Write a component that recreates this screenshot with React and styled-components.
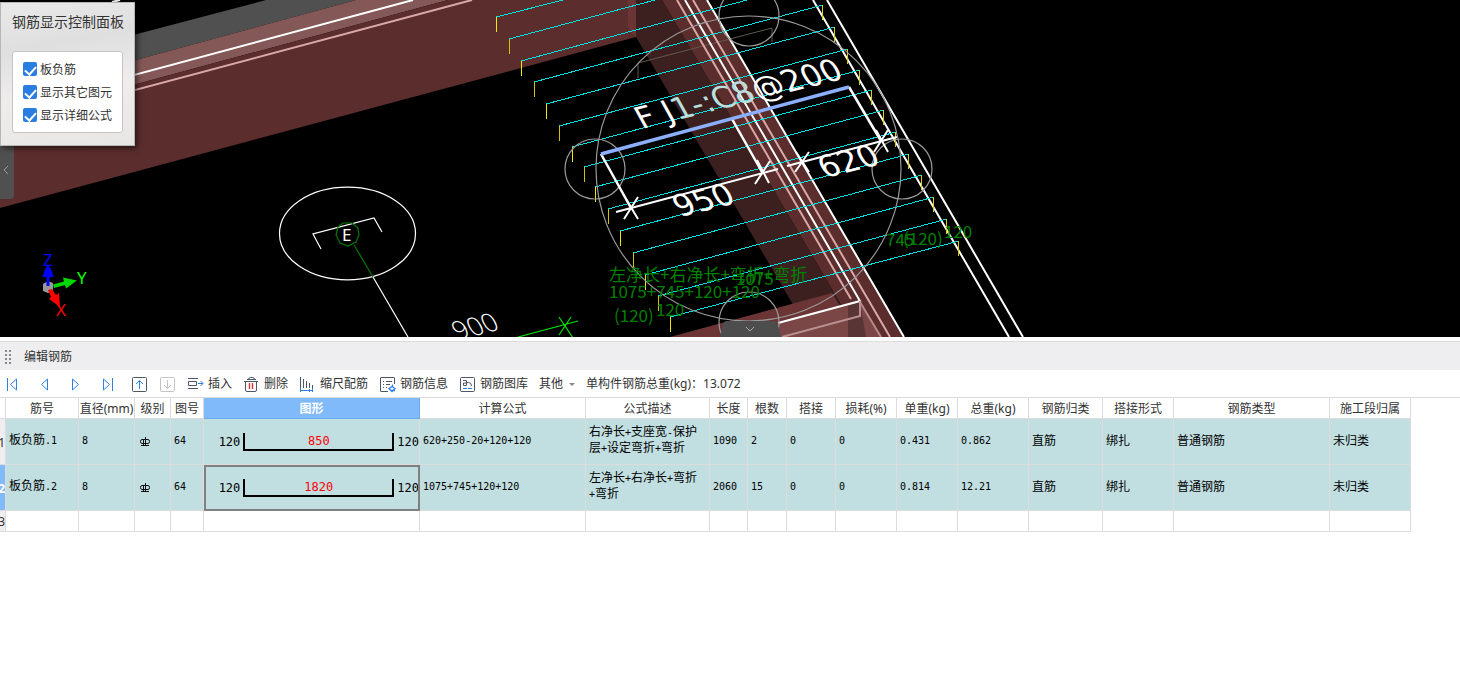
import React from 'react'
import styled, { createGlobalStyle, css } from 'styled-components'

const UI_FONT = '"Noto Sans", "Noto Sans CJK SC", sans-serif'
const CJK_FONT = '"Noto Sans CJK SC", sans-serif'
const MONO_FONT = '"DejaVu Sans Mono", "Noto Sans CJK SC", monospace'

const columns = [
	{ title: '筋号', width: 73 },
	{ title: '直径(mm)', width: 56 },
	{ title: '级别', width: 36 },
	{ title: '图号', width: 33 },
	{ title: '图形', width: 216, active: true },
	{ title: '计算公式', width: 166 },
	{ title: '公式描述', width: 124 },
	{ title: '长度', width: 38 },
	{ title: '根数', width: 39 },
	{ title: '搭接', width: 49 },
	{ title: '损耗(%)', width: 61 },
	{ title: '单重(kg)', width: 61 },
	{ title: '总重(kg)', width: 71 },
	{ title: '钢筋归类', width: 74 },
	{ title: '搭接形式', width: 71 },
	{ title: '钢筋类型', width: 156 },
	{ title: '施工段归属', width: 81 },
]

const rows = [
	{ shape: '850', before: ['板负筋.1', '8', <GradeMark key="g" />, '64'], after: ['620+250-20+120+120', '右净长+支座宽-保护层+设定弯折+弯折', '1090', '2', '0', '0', '0.431', '0.862', '直筋', '绑扎', '普通钢筋', '未归类'] },
	{ shape: '1820', selected: true, before: ['板负筋.2', '8', <GradeMark key="g" />, '64'], after: ['1075+745+120+120', '左净长+右净长+弯折+弯折', '2060', '15', '0', '0', '0.814', '12.21', '直筋', '绑扎', '普通钢筋', '未归类'] },
]

const leftEnds = [
	[496, 17], [509, 39], [521, 61], [534, 82], [546, 104], [559, 126], [572, 147], [584, 167],
	[595, 187], [608, 209], [620, 231], [633, 253], [645, 275], [658, 296], [670, 317],
]
const rightEnds = [
	[563, 0], [655, 0], [747, 0], [823, 5], [835, 27], [848, 49], [860, 70], [872, 90],
	[884, 110], [896, 132], [909, 154], [922, 175], [934, 197], [947, 219], [959, 241],
]

export default function App() {
	return <>
		<GlobalStyle />
		<Page>
			<Viewport>
				<Model />
				<DisplayPanel />
				<SideHandle aria-label="展开"><svg width="8" height="12"><path d="M6 2 2 6l4 4" fill="none" stroke="#999" /></svg></SideHandle>
			</Viewport>
			<Editor />
		</Page>
	</>
}
// --------------------------------------------------------
function DisplayPanel() {
	return <Panel>
		<PanelTitle>钢筋显示控制面板</PanelTitle>
		<Group>
			{['板负筋', '显示其它图元', '显示详细公式'].map( t =>
				<CheckLabel key={t}><Check type="checkbox" defaultChecked />{t}</CheckLabel>
			)}
		</Group>
	</Panel>
}
// --------------------------------------------------------
function Model() {
	return <Scene viewBox="0 0 1460 337" preserveAspectRatio="xMinYMin slice">
		<rect width="1460" height="337" fill="#000" />
		<polygon points="0,70 266,0 356,0 0,97" fill="#505050" />
		<polygon points="0,97 356,0 448,0 0,121" fill="#855858" />
		<polygon points="0,121 448,0 636,0 636,37 0,208" fill="#5b2d2d" />
		<polygon points="628,0 636,0 636,37 628,27" fill="#6b3535" />
		<polygon points="636,0 662,0 834,293 860,337 812,337 636,37" fill="#3c2020" />
		<polygon points="662,0 707,0 904,337 860,337" fill="#5b2d2d" />
		<polygon points="670,337 832,293 858,337" fill="#6b3535" />
		<polygon points="778,323 860,302 881,337 778,337" fill="#7a4646" />
		<polygon points="848,305 860,302 866,337 848,337" fill="#5a3535" />
		<path d="M638 78V63L772 28v14" fill="none" stroke="#63584a" />
		<g fill="none" strokeWidth="2">
			<path d="M0 111 413 0" stroke="#fff" />
			<path d="M0 126 472 0" stroke="#dba8a8" />
			<path d="M677 0 851 299M693 0 890 337" stroke="#dba8a8" />
			<path d="M860 302 881 337" stroke="#b88888" />
			<path d="M685 0 860 301 778 323" stroke="#fff" />
			<path d="M860 301v15L782 337" stroke="#b89090" />
			<path d="M707 0 904 337M813 0 1009 337M827 0 1023 337M112 2l8-2" stroke="#fff" />
		</g>
		{ leftEnds.map( ([x, y], i) => <g key={i} fill="none" shapeRendering="crispEdges">
			<path d={`M${x} ${y} ${rightEnds[i][0]} ${rightEnds[i][1]}`} stroke="#00e0e0" />
			<path d={`M${x + 0.5} ${y}v15`} stroke={i % 2 ? '#d0c400' : '#f0e800'} />
			{ i > 2 && <path d={`M${rightEnds[i][0] - 0.5} ${rightEnds[i][1]}v15`} stroke="#d8d000" /> }
		</g>)}
		<g fill="none" stroke="#9a9a9a" strokeWidth="1.2">
			<circle cx="748.5" cy="168.5" r="152.5" />
			<circle cx="595" cy="169" r="30" />
			<circle cx="749" cy="16" r="30" />
			<circle cx="902" cy="169" r="30" />
			<circle cx="749" cy="322" r="30" />
		</g>
		<g fill="none" stroke="#fff" strokeWidth="2">
			<path d="M601 154 631 208M849 87l32 54M732 119l30 53" strokeWidth="2.5" />
			<path d="M616 212 778 169M787 166l110-29" />
			<path d="M638 197 624 219M626 199l12 20M770 161l-15 23M757 160l12 23M809 152l-14 20M796 152l13 20M888 130l-14 22M876 130l12 22" />
		</g>
		<path d="M601 154 849 87" stroke="#8cb0ff" strokeWidth="3.5" />
		<g fill="none" stroke="#fff" strokeWidth="1.2">
			<ellipse cx="347.5" cy="233.5" rx="68" ry="46.3" />
			<path d="M321 249 313 234 374 218 382 232M373 277 408 337" />
			<path d="M343 223l9 0 6 5 1 7-3 7-8 4-8-3-4-8 2-8zM354 245l19 32" stroke="#007800" />
			<path d="M518 337 578 321M559 317l14 21M571 317l-12 18" stroke="#00e400" />
		</g>
		<DimText transform="translate(642 129) rotate(-14) skewX(15)">
			F J<tspan fill="#b8dede">1-:C8</tspan>@200
		</DimText>
		<DimText transform="translate(680 217) rotate(-14) skewX(15)">950</DimText>
		<DimText transform="translate(825 178) rotate(-14) skewX(15)">620</DimText>
		<ThinText transform="translate(458 340) rotate(-14) skewX(15)">900</ThinText>
		<AxisText x="342" y="241" fill="#fff">E</AxisText>
		<Formula x="609" y="281">左净长+右净长+弯折+弯折</Formula>
		<Formula x="609" y="298">1075+745+120+120</Formula>
		<Formula x="614" y="322">(120)</Formula>
		<Formula x="656" y="316">120</Formula>
		<Formula x="736" y="285">1075</Formula>
		<Formula x="886" y="246">745</Formula>
		<Formula x="903" y="245">(120)</Formula>
		<Formula x="944" y="238">120</Formula>
		<path d="M43 284l5-3 5 2v7l-5 3-5-2z" fill="#999" />
		<path d="M46.5 286v-9h-4q2-8 5.5-12 4 4 5.5 12h-4v9z" fill="#00f" />
		<path d="M53 284.5l11-3-1-4 14 3-11 8-1-3.5-11 3z" fill="#00d800" />
		<path d="M48 290l4-1 4 6 3-2 1 14-11-8 2-2z" fill="#f00" />
		<AxisText x="43" y="266" fill="#00f">Z</AxisText>
		<AxisText x="77" y="284" fill="#0f0">Y</AxisText>
		<AxisText x="56" y="316" fill="#f00">X</AxisText>
		<path d="M720 337l3-13q1-3 4-3h46q4 0 5 4l3 12z" fill="#4d4d4d" />
		<path d="M746 327l4 4 4-4" fill="none" stroke="#aaa" />
	</Scene>
}
// --------------------------------------------------------
function Editor() {
	return <EditorPanel>
		<TitleBar><Grip viewBox="0 0 6 14"><path d="M0 1h2M4 1h2M0 5h2M4 5h2M0 9h2M4 9h2M0 13h2M4 13h2" stroke="#888" strokeWidth="2" /></Grip>编辑钢筋</TitleBar>
		<Toolbar>
			<NavButtons>
				<Tool aria-label="首条"><Icon stroke="#2f7fe6"><path d="M3.5 2v13M12.500 3 6.500 8.500l6 5.500z" /></Icon></Tool>
				<Tool aria-label="上一条"><Icon stroke="#2f7fe6"><path d="M11.500 3 5.500 8.500l6 5.500z" /></Icon></Tool>
				<Tool aria-label="下一条"><Icon stroke="#2f7fe6"><path d="M4.500 3l6 5.500-6 5.500z" /></Icon></Tool>
				<Tool aria-label="末条"><Icon stroke="#2f7fe6"><path d="M12.500 2v13M3.500 3l6 5.500-6 5.500z" /></Icon></Tool>
			</NavButtons>
			<MoveButtons>
				<Tool aria-label="上移"><Icon stroke="#4c5664"><rect x="1.500" y="1.500" width="14" height="14" rx="1" /><path d="M8.500 13V5M5 8l3.500-3.500L12 8" stroke="#2f7fe6" /></Icon></Tool>
				<Tool aria-label="下移"><Icon stroke="#c4c4c4"><rect x="1.500" y="1.500" width="14" height="14" rx="1" /><path d="M8.500 4v8M5 9l3.500 3.500L12 9" /></Icon></Tool>
			</MoveButtons>
			<Actions>
				<Tool><Icon stroke="#4c5664"><path d="M1 2.500h10M1 12.500h10M1.500 5.500h8v4h-8z" /><path d="M11 7.500h5M13.500 5l2.500 2.500-2.500 2.500" stroke="#2f7fe6" /></Icon>插入</Tool>
				<Tool><Icon stroke="#4c5664"><path d="M1 5.500h14M5.500 3.500q0-2 2-2h2q2 0 2 2M2.500 5v9q0 1.500 1.500 1.500h8q1.500 0 1.500-1.500V5M4 3.500h9" /><path d="M6.500 7v6M9.500 7v6" stroke="#e03030" strokeWidth="1.4" /></Icon>删除</Tool>
				<Tool><Icon stroke="#4c5664"><path d="M1.500 1v11M4.500 3v9M7.500 5v7M10.500 7v5M13.500 9v3" /><path d="M1.500 12v4M13.500 12v4M1 14.500h13M10.500 13v3" stroke="#2f7fe6" /></Icon>缩尺配筋</Tool>
				<Tool><Icon stroke="#4c5664"><path d="M9 15.500H2q-.5 0-.5-.5V2q0-.5.5-.5h13q.5 0 .5.5v6M4 5.500h1M7 5.500h6M4 8.500h1M7 8.500h4M4 11.500h1M7 11.500h1" /><path d="M13.500 8.500v2.500M10 12.500l3-2 3 2-3 3zM12 14.500h4" stroke="#2f7fe6" strokeWidth="1.3" /></Icon>钢筋信息</Tool>
				<Tool><Icon stroke="#4c5664"><rect x="1.500" y="1.500" width="14" height="14" rx="1" /><path d="M4 4.500h3.500v5H4.500v-2.500H7.500M7.500 6.500h2q3 0 3 3.500" /><path d="M4 12.500h4M9 12.500h4" stroke="#2f7fe6" /></Icon>钢筋图库</Tool>
				<Tool>其他<Caret /></Tool>
				<Total>单构件钢筋总重(kg)：13.072</Total>
			</Actions>
		</Toolbar>
		<TableWrap>
			<Table>
				<colgroup>
					<col width="6" />
					{ columns.map( c => <col key={c.title} width={c.width} /> )}
				</colgroup>
				<thead>
					<tr>
						<HeadCell />
						{ columns.map( c => <HeadCell key={c.title} $active={c.active} scope="col">{c.title}</HeadCell> )}
					</tr>
				</thead>
				<tbody>
					{ rows.map( (r, i) =>
						<DataRow key={i}>
							<RowHead $active={r.selected} scope="row"><RowNo>{i + 1}</RowNo></RowHead>
							{ r.before.map( (c, j) => <Cell key={j}>{cellText(c)}</Cell> )}
							<ShapeCell $selected={r.selected}>
								<ShapeBox>
									<span>120</span>
									<Bar>{r.shape}</Bar>
									<span>120</span>
								</ShapeBox>
							</ShapeCell>
							{ r.after.map( (c, j) => <Cell key={j}>{cellText(c)}</Cell> )}
						</DataRow>
					)}
					<EmptyRow>
						<RowHead scope="row"><RowNo>3</RowNo></RowHead>
						{ columns.map( c => <EmptyCell key={c.title} /> )}
					</EmptyRow>
				</tbody>
			</Table>
		</TableWrap>
	</EditorPanel>
}
// --------------------------------------------------------
// latin runs are set smaller so that they take half the width of a CJK glyph
function cellText(value) {
	if (typeof value !== 'string') return value
	return value.split(/([\x20-\x7e]+)/).filter(Boolean).map( (part, i) =>
		/[\x20-\x7e]/.test(part) ? <Latin key={i}>{part}</Latin> : part
	)
}
// --------------------------------------------------------
function GradeMark() {
	return <Grade viewBox="0 0 10 10"><path d="M2 2.500h6q1.500 0 1.500 2t-1.500 2H2Q.5 6.500.5 4.500t1.500-2zM3.500 2v7M5.500 0v9M1 8.500h8" fill="none" stroke="#111" /></Grade>
}
// --------------------------------------------------------
function Icon({children, stroke}) {
	return <IconSvg viewBox="0 0 17 17" stroke={stroke}>{children}</IconSvg>
}
// --------------------------------------------------------
const GlobalStyle = createGlobalStyle`
	* { box-sizing: border-box; }
	body {
		margin: 0;
		background: #fff;
		color: #333;
		font: 12px/16px ${UI_FONT};
	}
	button { font: inherit; color: inherit; }
`
// --------------------------------------------------------
const Page = styled.div`
	display: flex;
	flex-direction: column;
	min-height: 100vh;
`
// --------------------------------------------------------
const Viewport = styled.main`
	position: relative;
	height: 337px;
	overflow: hidden;
	background: #000;
`
// --------------------------------------------------------
const Scene = styled.svg`
	display: block;
	width: 100%;
	height: 100%;
`
// --------------------------------------------------------
const DimText = styled.text`
	font: 31px "DejaVu Sans", sans-serif;
	fill: #fff;
`
// --------------------------------------------------------
const ThinText = styled.text`
	font: 300 26px "Open Sans", sans-serif;
	fill: #fff;
`
// --------------------------------------------------------
const AxisText = styled.text`
	font: 17px "Noto Sans", sans-serif;
`
// --------------------------------------------------------
const Formula = styled.text`
	font: 17px ${CJK_FONT};
	fill: #008000;
`
// --------------------------------------------------------
const Panel = styled.section`
	position: absolute;
	z-index: 1;
	top: 2px;
	left: 0;
	width: 135px;
	padding: 10px 11px 12px;
	border: 1px solid #b4b8b6;
	background: linear-gradient(170deg, #e9e9e9, #dfdfdf 30%, #efecec 60%, #e8e5e5);
	box-shadow: 2px 2px 6px rgba(0, 0, 0, 0.6);
`
// --------------------------------------------------------
const PanelTitle = styled.h2`
	margin: 0 0 20px;
	font: 14px/18px ${UI_FONT};
	white-space: nowrap;
`
// --------------------------------------------------------
const Group = styled.div`
	display: grid;
	gap: 7px;
	width: 111px;
	padding: 10px 10px 8px;
	border: 1px solid #c4c4c4;
	border-radius: 3px;
	background: #fff;
`
// --------------------------------------------------------
const CheckLabel = styled.label`
	display: flex;
	align-items: flex-start;
	gap: 3px;
	white-space: nowrap;
`
// --------------------------------------------------------
const Check = styled.input`
	appearance: none;
	display: grid;
	justify-content: center;
	width: 14px;
	height: 14px;
	margin: 0;
	border-radius: 2px;
	background: #2a7de1;
	&:checked:after {
		content: '';
		width: 5px;
		height: 9px;
		margin-top: 2px;
		border: solid #fff;
		border-width: 0 2px 2px 0;
		transform: rotate(42deg);
	}
`
// --------------------------------------------------------
const SideHandle = styled.button`
	position: absolute;
	top: 140px;
	left: 0;
	display: flex;
	align-items: center;
	width: 14px;
	height: 59px;
	padding: 0 2px;
	border: 0;
	border-radius: 0 4px 4px 0;
	background: #505050;
`
// --------------------------------------------------------
const EditorPanel = styled.section`
	flex: 1;
	padding-top: 4px;
`
// --------------------------------------------------------
const TitleBar = styled.header`
	display: flex;
	align-items: center;
	gap: 13px;
	height: 29px;
	padding: 2px 0 0 5px;
	border-top: 1px solid #dcdcdc;
	background: #eeeef0;
`
// --------------------------------------------------------
const Grip = styled.svg`
	width: 6px;
	height: 14px;
`
// --------------------------------------------------------
const Toolbar = styled.div`
	display: flex;
	align-items: center;
	height: 27px;
	padding: 1px 0 0 4px;
`
// --------------------------------------------------------
const NavButtons = styled.div`
	display: flex;
	gap: 15px;
`
// --------------------------------------------------------
const MoveButtons = styled.div`
	display: flex;
	gap: 11px;
	margin: 0 11px 0 14px;
`
// --------------------------------------------------------
const Actions = styled.div`
	display: flex;
	align-items: center;
	gap: 11px;
`
// --------------------------------------------------------
const Tool = styled.button`
	display: flex;
	align-items: center;
	gap: 4px;
	padding: 0;
	border: 0;
	background: none;
	white-space: nowrap;
`
// --------------------------------------------------------
const IconSvg = styled.svg`
	width: 17px;
	height: 17px;
	fill: none;
`
// --------------------------------------------------------
const Caret = styled.i`
	margin-left: 2px;
	border: solid transparent;
	border-width: 3px 3px 0;
	border-top-color: #888;
`
// --------------------------------------------------------
const Total = styled.span`
	white-space: nowrap;
`
// --------------------------------------------------------
const TableWrap = styled.div`
	overflow-x: auto;
	border-top: 1px solid #dcdcdc;
`
// --------------------------------------------------------
const Table = styled.table`
	width: 1411px;
	table-layout: fixed;
	border-spacing: 0;
`
// --------------------------------------------------------
const line = css`
	border: solid #dcdcdc;
	border-width: 0 1px 1px 0;
`
// --------------------------------------------------------
const HeadCell = styled.th`
	${line}
	height: 21px;
	padding: 2px 0 0;
	font-weight: normal;
	white-space: nowrap;
	${props => props.$active && css`
		border-color: #6ca8ee;
		background: #80bafa;
		color: #fff;
		font-weight: bold;
	`}
`
// --------------------------------------------------------
const DataRow = styled.tr`
	height: 46px;
`
// --------------------------------------------------------
const EmptyRow = styled.tr`
	height: 21px;
`
// --------------------------------------------------------
const RowHead = styled.th`
	${line}
	padding: 2px 0 0;
	background: #eeeef0;
	font-weight: normal;
	${props => props.$active && css`
		background: #80bafa;
		color: #fff;
		font-weight: bold;
	`}
`
// --------------------------------------------------------
const RowNo = styled.div`
	display: flex;
	justify-content: flex-end;
	overflow: hidden;
`
// --------------------------------------------------------
const Cell = styled.td`
	${line}
	padding: 0 9px 3px 3px;
	background: #c1dee0;
	color: #000;
	font: 12px/14px ${CJK_FONT};
	word-break: break-all;
`
// --------------------------------------------------------
const EmptyCell = styled.td`
	${line}
`
// --------------------------------------------------------
const Latin = styled.span`
	font: 10px/14px ${MONO_FONT};
`
// --------------------------------------------------------
const Grade = styled.svg`
	display: block;
	width: 10px;
	height: 10px;
	margin: 3px 0 0 2px;
`
// --------------------------------------------------------
const ShapeCell = styled.td`
	${line}
	padding: 0;
	background: #c1dee0;
	color: #000;
	${props => props.$selected && css`
		outline: 2px solid #808080;
		outline-offset: -2px;
	`}
`
// --------------------------------------------------------
const ShapeBox = styled.div`
	display: flex;
	align-items: center;
	justify-content: flex-end;
	gap: 3px;
	font: 12px/16px ${MONO_FONT};
`
// --------------------------------------------------------
const Bar = styled.div`
	width: 151px;
	height: 18px;
	border: solid #000;
	border-width: 0 2px 2px;
	color: #f00;
	text-align: center;
`
// --------------------------------------------------------
